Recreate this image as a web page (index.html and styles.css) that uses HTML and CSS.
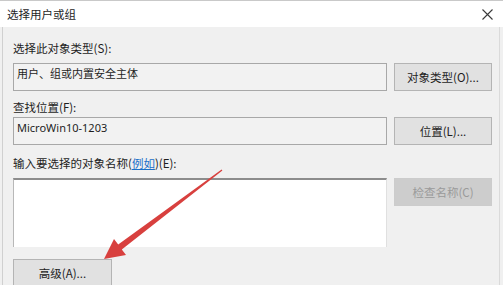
FILE: index.html
```html
<!DOCTYPE html>
<html lang="zh-CN">
<head>
<meta charset="utf-8">
<title>选择用户或组</title>
<link rel="stylesheet" href="styles.css">
</head>
<body>
<div class="window">
  <div class="titlebar">
    <span class="title">选择用户或组</span>
    <svg class="close" width="11" height="11" viewBox="0 0 11 11"><path d="M0.5 0.5 L10.5 10.5 M10.5 0.5 L0.5 10.5" stroke="#3a3a3a" stroke-width="1.1" fill="none"/></svg>
  </div>
  <div class="content">
    <div class="label l1">选择此对象类型(S):</div>
    <div class="row">
      <div class="field">用户、组或内置安全主体</div>
      <div class="btn">对象类型(O)...</div>
    </div>
    <div class="label l2">查找位置(F):</div>
    <div class="row">
      <div class="field">MicroWin10-1203</div>
      <div class="btn">位置(L)...</div>
    </div>
    <div class="label l3">输入要选择的对象名称(<span class="link">例如</span>)(E):</div>
    <div class="row tall">
      <div class="area"></div>
      <div class="side"><div class="btn disabled">检查名称(C)</div></div>
    </div>
    <div class="bottom">
      <div class="btn adv">高级(A)...</div>
    </div>
  </div>
  <svg class="arrow" width="503" height="285" viewBox="0 0 503 285">
    <polygon points="104,259 114,239 118.2,244.6 221.6,169.5 222.4,170.5 121.8,249.4 126,255" fill="#d8403e"/>
  </svg>
</div>
</body>
</html>
```
FILE: styles.css
```css
html, body {
  margin: 0;
  padding: 0;
  background: #f0f0f0;
}
body {
  font-family: "Noto Sans CJK SC", "Microsoft YaHei", sans-serif;
  color: #1e1e1e;
  width: 503px;
  height: 285px;
  overflow: hidden;
}
.window {
  position: relative;
  width: 503px;
  height: 285px;
}
.titlebar {
  height: 26px;
  background: #ffffff;
  border-top: 1px solid #c9c9c9;
  display: flex;
  align-items: center;
  justify-content: space-between;
  padding: 0 10px 0 7px;
}
.title {
  font-size: 11.5px;
  line-height: 16px;
}
.close {
  display: block;
}
.content {
  margin: 0 3px 0 2px;
  border-left: 1px solid #d0d0d0;
  border-right: 1px solid #dadada;
  padding: 13px 7px 0 10px;
  height: 258px;
  box-sizing: border-box;
}
.label {
  font-size: 11.5px;
  line-height: 16px;
  height: 16px;
  white-space: nowrap;
}
.l1 { margin-bottom: 7px; }
.l2 { margin-top: 8px; margin-bottom: 2px; }
.l3 { margin-top: 10px; margin-bottom: 7px; }
.link {
  color: #1a6fc9;
  text-decoration: underline;
}
.row {
  display: flex;
  gap: 7px;
  height: 28px;
}
.row.tall {
  height: 69px;
}
.field {
  width: 374px;
  box-sizing: border-box;
  border: 1px solid #a8a8a8;
  background: #f2f2f2;
  font-family: "Noto Sans", "Noto Sans CJK SC", sans-serif;
  font-size: 11px;
  line-height: 16px;
  padding: 2px 0 0 3px;
  white-space: nowrap;
}
.btn {
  width: 98px;
  height: 28px;
  box-sizing: border-box;
  border: 1px solid #b4b4b4;
  background: #e1e1e1;
  font-size: 11.5px;
  display: flex;
  align-items: center;
  justify-content: center;
  white-space: nowrap;
}
.btn.disabled {
  border-color: #cccccc;
  background: #cdcdcd;
  color: #9a9a9a;
}
.area {
  width: 374px;
  box-sizing: border-box;
  background: #ffffff;
  border-top: 2px solid #8c8c8c;
  border-left: 1px solid #b8b8b8;
  border-right: 1px solid #e0e0e0;
}
.bottom {
  margin-top: 12px;
}
.btn.adv {
  width: 99px;
}
.arrow {
  position: absolute;
  left: 0;
  top: 0;
  pointer-events: none;
}
```
